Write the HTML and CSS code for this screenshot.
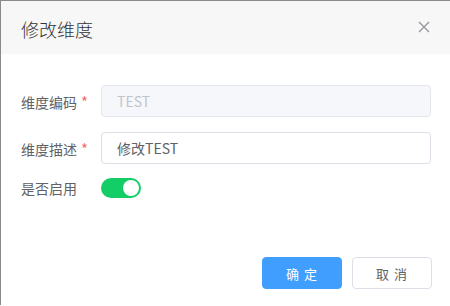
FILE: index.html
```html
<!DOCTYPE html>
<html>
<head>
<meta charset="utf-8">
<link rel="stylesheet" href="styles.css">
</head>
<body>
<div class="dialog">
  <div class="header">
    <span class="title">修改维度</span>
    <svg class="close" width="12" height="12" viewBox="0 0 12 12"><path d="M1 1L11 11M11 1L1 11" stroke="#909399" stroke-width="1.2" fill="none"/></svg>
  </div>
  <div class="body">
    <div class="row">
      <label class="label">维度编码<span class="req">*</span></label>
      <div class="input disabled">TEST</div>
    </div>
    <div class="row">
      <label class="label">维度描述<span class="req">*</span></label>
      <div class="input">修改TEST</div>
    </div>
    <div class="row row-switch">
      <label class="label">是否启用</label>
      <span class="switch"><span class="knob"></span></span>
    </div>
  </div>
  <div class="footer">
    <button class="btn primary">确 定</button>
    <button class="btn">取 消</button>
  </div>
</div>
</body>
</html>
```
FILE: styles.css
```css
html, body { margin: 0; padding: 0; background: #fff; }
body { font-family: "Noto Sans CJK SC", "Noto Sans", sans-serif; width: 450px; height: 306px; overflow: hidden; }
.dialog { border-top: 1px solid #8a8a8a; border-left: 1px solid #8a8a8a; height: 305px; box-sizing: border-box; }
.header { height: 53px; background: #f7f7f7; display: flex; align-items: center; justify-content: space-between; padding: 0 20px 0 20px; box-sizing: border-box; }
.title { font-size: 18px; font-weight: 300; color: #333; line-height: 24px; padding-top: 2px; }
.close { margin-right: 0; margin-top: -2px; }
.body { padding: 31px 19px 0 20px; }
.row { display: flex; align-items: center; height: 32px; margin-bottom: 15px; }
.row-switch { margin-top: -7px; }
.label { width: 80px; font-size: 14px; color: #606266; flex-shrink: 0; }
.req { color: #f56c6c; margin-left: 4px; font-size: 15px; }
.input { flex: 1; height: 32px; box-sizing: border-box; border: 1px solid #dcdfe6; border-radius: 4px; font-size: 14px; color: #606266; padding: 0 15px; display: flex; align-items: center; }
.input.disabled { background: #f5f7fa; border-color: #e4e7ed; color: #c0c4cc; }
.switch { width: 40px; height: 20px; border-radius: 10px; background: #13ce66; position: relative; display: inline-block; }
.knob { position: absolute; right: 2px; top: 2px; width: 16px; height: 16px; border-radius: 50%; background: #fff; }
.footer { display: flex; justify-content: flex-end; gap: 10px; padding: 38px 18px 0 0; }
.btn { width: 80px; height: 32px; font-family: inherit; font-size: 13px; letter-spacing: 1px; border-radius: 4px; border: 1px solid #dcdfe6; background: #fff; color: #606266; padding: 0; }
.btn.primary { background: #409eff; border-color: #409eff; color: #fff; }
```
